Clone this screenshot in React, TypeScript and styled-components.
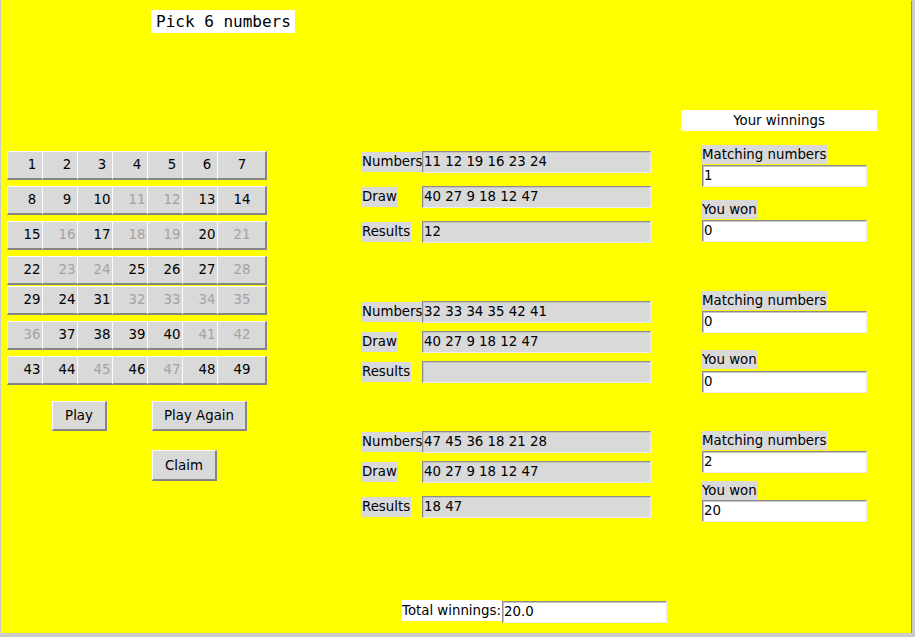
import React from "react";
import styled, { createGlobalStyle } from "styled-components";

const Global = createGlobalStyle`
  html, body {
    margin: 0;
    padding: 0;
    background: #cbcbcb;
  }
  body {
    font-family: "DejaVu Sans", "Liberation Sans", sans-serif;
    font-size: 13.33px;
    color: #000;
  }
`;

const Window = styled.div`
  margin-left: 1px;
  width: 910px;
  height: 633px;
  background: #ffff00;
  display: flex;
  flex-direction: column;
  box-shadow: 1px 1px 0 #8a8a8a;
`;

const TitleRow = styled.div`
  padding: 10px 0 0 150px;
  display: flex;
`;

const TitleBox = styled.div`
  background: #fff;
  font-family: "DejaVu Sans Mono", "Liberation Mono", monospace;
  font-size: 16px;
  line-height: 23px;
  height: 23px;
  padding: 0 4px 0 5px;
  white-space: pre;
`;

const Columns = styled.div`
  flex: 1;
  display: flex;
`;

const LeftCol = styled.div`
  width: 354px;
  padding: 118px 0 0 6px;
  display: flex;
  flex-direction: column;
`;

const NumRow = styled.div<{ $top: number }>`
  display: flex;
  margin-top: ${(p) => p.$top}px;
`;

const NumButton = styled.div<{ $w: number; $off: boolean; $last: boolean }>`
  width: ${(p) => p.$w}px;
  height: 29px;
  box-sizing: border-box;
  background: #d9d9d9;
  border-top: 1px solid #fbfbfb;
  border-left: 1px solid #fbfbfb;
  border-bottom: 2px solid #858585;
  border-right: ${(p) => (p.$last ? "2px solid #858585" : "none")};
  display: flex;
  align-items: center;
  overflow: hidden;
  color: ${(p) => (p.$off ? "#a3a3a3" : "#000")};
`;

const NumText = styled.span`
  flex: 0 0 48px;
  text-align: center;
  line-height: 26px;
`;

const Actions = styled.div`
  display: grid;
  grid-template-columns: 100px auto;
  justify-items: start;
  row-gap: 19px;
  margin: 16px 0 0 45px;
`;

const ActionButton = styled.div<{ $col: number; $w: number; $h: number }>`
  grid-column: ${(p) => p.$col};
  width: ${(p) => p.$w}px;
  height: ${(p) => p.$h}px;
  box-sizing: border-box;
  background: #d9d9d9;
  border-top: 1px solid #fbfbfb;
  border-left: 1px solid #fbfbfb;
  border-bottom: 2px solid #858585;
  border-right: 2px solid #858585;
  display: flex;
  align-items: center;
  justify-content: center;
  white-space: nowrap;
`;

const MidCol = styled.div`
  width: 320px;
  padding-top: 118px;
  display: flex;
  flex-direction: column;
`;

const DataRow = styled.div<{ $top: number }>`
  display: flex;
  align-items: center;
  margin-top: ${(p) => p.$top}px;
  height: 22px;
`;

const DataLabelCell = styled.div`
  width: 61px;
  display: flex;
`;

const GrayLabel = styled.span<{ $h: number }>`
  background: #d9d9d9;
  padding: 0 1px;
  height: ${(p) => p.$h}px;
  line-height: ${(p) => p.$h}px;
  white-space: nowrap;
`;

const Entry = styled.div<{ $w: number; $white: boolean }>`
  width: ${(p) => p.$w}px;
  height: 22px;
  box-sizing: border-box;
  background: ${(p) => (p.$white ? "#fff" : "#d9d9d9")};
  border-top: 1px solid #8c8c8c;
  border-left: 1px solid #8c8c8c;
  border-bottom: 1px solid #ececec;
  border-right: 1px solid #ececec;
  box-shadow: inset 1px 1px 0 #c4c4c4;
  padding-left: 1px;
  line-height: 20px;
  white-space: pre;
  overflow: hidden;
`;

const RightCol = styled.div`
  flex: 1;
  padding-top: 77px;
  display: flex;
  flex-direction: column;
  align-items: flex-start;
`;

const WinningsTitle = styled.div`
  width: 196px;
  height: 21px;
  line-height: 21px;
  background: #fff;
  text-align: center;
`;

const RightItem = styled.div<{ $top: number; $indent: number }>`
  margin: ${(p) => p.$top}px 0 0 ${(p) => p.$indent}px;
  display: flex;
`;

const Footer = styled.div`
  padding: 0 0 10px 401px;
  display: flex;
  align-items: flex-start;
  height: 23px;
`;

const WhiteLabel = styled.span`
  background: #fff;
  width: 100px;
  height: 21px;
  line-height: 21px;
  white-space: nowrap;
  overflow: hidden;
`;

const FooterEntry = styled.div`
  margin-top: 1px;
  display: flex;
`;

type Num = { n: string; off?: boolean };
const rows: { top: number; nums: Num[] }[] = [
  { top: 0, nums: [{ n: "1" }, { n: "2" }, { n: "3" }, { n: "4" }, { n: "5" }, { n: "6" }, { n: "7" }] },
  { top: 6, nums: [{ n: "8" }, { n: "9" }, { n: "10" }, { n: "11", off: true }, { n: "12", off: true }, { n: "13" }, { n: "14" }] },
  { top: 6, nums: [{ n: "15" }, { n: "16", off: true }, { n: "17" }, { n: "18", off: true }, { n: "19", off: true }, { n: "20" }, { n: "21", off: true }] },
  { top: 6, nums: [{ n: "22" }, { n: "23", off: true }, { n: "24", off: true }, { n: "25" }, { n: "26" }, { n: "27" }, { n: "28", off: true }] },
  { top: 1, nums: [{ n: "29" }, { n: "24" }, { n: "31" }, { n: "32", off: true }, { n: "33", off: true }, { n: "34", off: true }, { n: "35", off: true }] },
  { top: 6, nums: [{ n: "36", off: true }, { n: "37" }, { n: "38" }, { n: "39" }, { n: "40" }, { n: "41", off: true }, { n: "42", off: true }] },
  { top: 6, nums: [{ n: "43" }, { n: "44" }, { n: "45", off: true }, { n: "46" }, { n: "47", off: true }, { n: "48" }, { n: "49" }] },
];

const midRows: { top: number; label: string; value: string }[] = [
  { top: 0, label: "Numbers", value: "11 12 19 16 23 24" },
  { top: 13, label: "Draw", value: "40 27 9 18 12 47" },
  { top: 13, label: "Results", value: "12" },
  { top: 58, label: "Numbers", value: "32 33 34 35 42 41" },
  { top: 8, label: "Draw", value: "40 27 9 18 12 47" },
  { top: 8, label: "Results", value: "" },
  { top: 48, label: "Numbers", value: "47 45 36 18 21 28" },
  { top: 8, label: "Draw", value: "40 27 9 18 12 47" },
  { top: 13, label: "Results", value: "18 47" },
];

const rightItems: { top: number; kind: "label" | "entry"; text: string }[] = [
  { top: 14, kind: "label", text: "Matching numbers" },
  { top: 1, kind: "entry", text: "1" },
  { top: 13, kind: "label", text: "You won" },
  { top: 1, kind: "entry", text: "0" },
  { top: 49, kind: "label", text: "Matching numbers" },
  { top: 1, kind: "entry", text: "0" },
  { top: 17, kind: "label", text: "You won" },
  { top: 2, kind: "entry", text: "0" },
  { top: 38, kind: "label", text: "Matching numbers" },
  { top: 1, kind: "entry", text: "2" },
  { top: 8, kind: "label", text: "You won" },
  { top: 0, kind: "entry", text: "20" },
];

export default function App() {
  return (
    <>
      <Global />
      <Window>
        <TitleRow>
          <TitleBox>Pick 6 numbers</TitleBox>
        </TitleRow>
        <Columns>
          <LeftCol>
            {rows.map((r, ri) => (
              <NumRow key={ri} $top={r.top}>
                {r.nums.map((x, i) => {
                  const last = i === r.nums.length - 1;
                  return (
                    <NumButton key={i} $w={last ? 50 : 35} $off={!!x.off} $last={last}>
                      <NumText>{x.n}</NumText>
                    </NumButton>
                  );
                })}
              </NumRow>
            ))}
            <Actions>
              <ActionButton $col={1} $w={55} $h={30}>Play</ActionButton>
              <ActionButton $col={2} $w={95} $h={30}>Play Again</ActionButton>
              <ActionButton $col={2} $w={65} $h={31}>Claim</ActionButton>
            </Actions>
          </LeftCol>
          <MidCol>
            {midRows.map((r, i) => (
              <DataRow key={i} $top={r.top}>
                <DataLabelCell>
                  <GrayLabel $h={20}>{r.label}</GrayLabel>
                </DataLabelCell>
                <Entry $w={229} $white={false}>{r.value}</Entry>
              </DataRow>
            ))}
          </MidCol>
          <RightCol>
            <WinningsTitle>Your winnings</WinningsTitle>
            {rightItems.map((it, i) =>
              it.kind === "label" ? (
                <RightItem key={i} $top={it.top} $indent={20}>
                  <GrayLabel $h={19}>{it.text}</GrayLabel>
                </RightItem>
              ) : (
                <RightItem key={i} $top={it.top} $indent={21}>
                  <Entry $w={165} $white={true}>{it.text}</Entry>
                </RightItem>
              )
            )}
          </RightCol>
        </Columns>
        <Footer>
          <WhiteLabel>Total winnings:</WhiteLabel>
          <FooterEntry>
            <Entry $w={165} $white={true}>20.0</Entry>
          </FooterEntry>
        </Footer>
      </Window>
    </>
  );
}
